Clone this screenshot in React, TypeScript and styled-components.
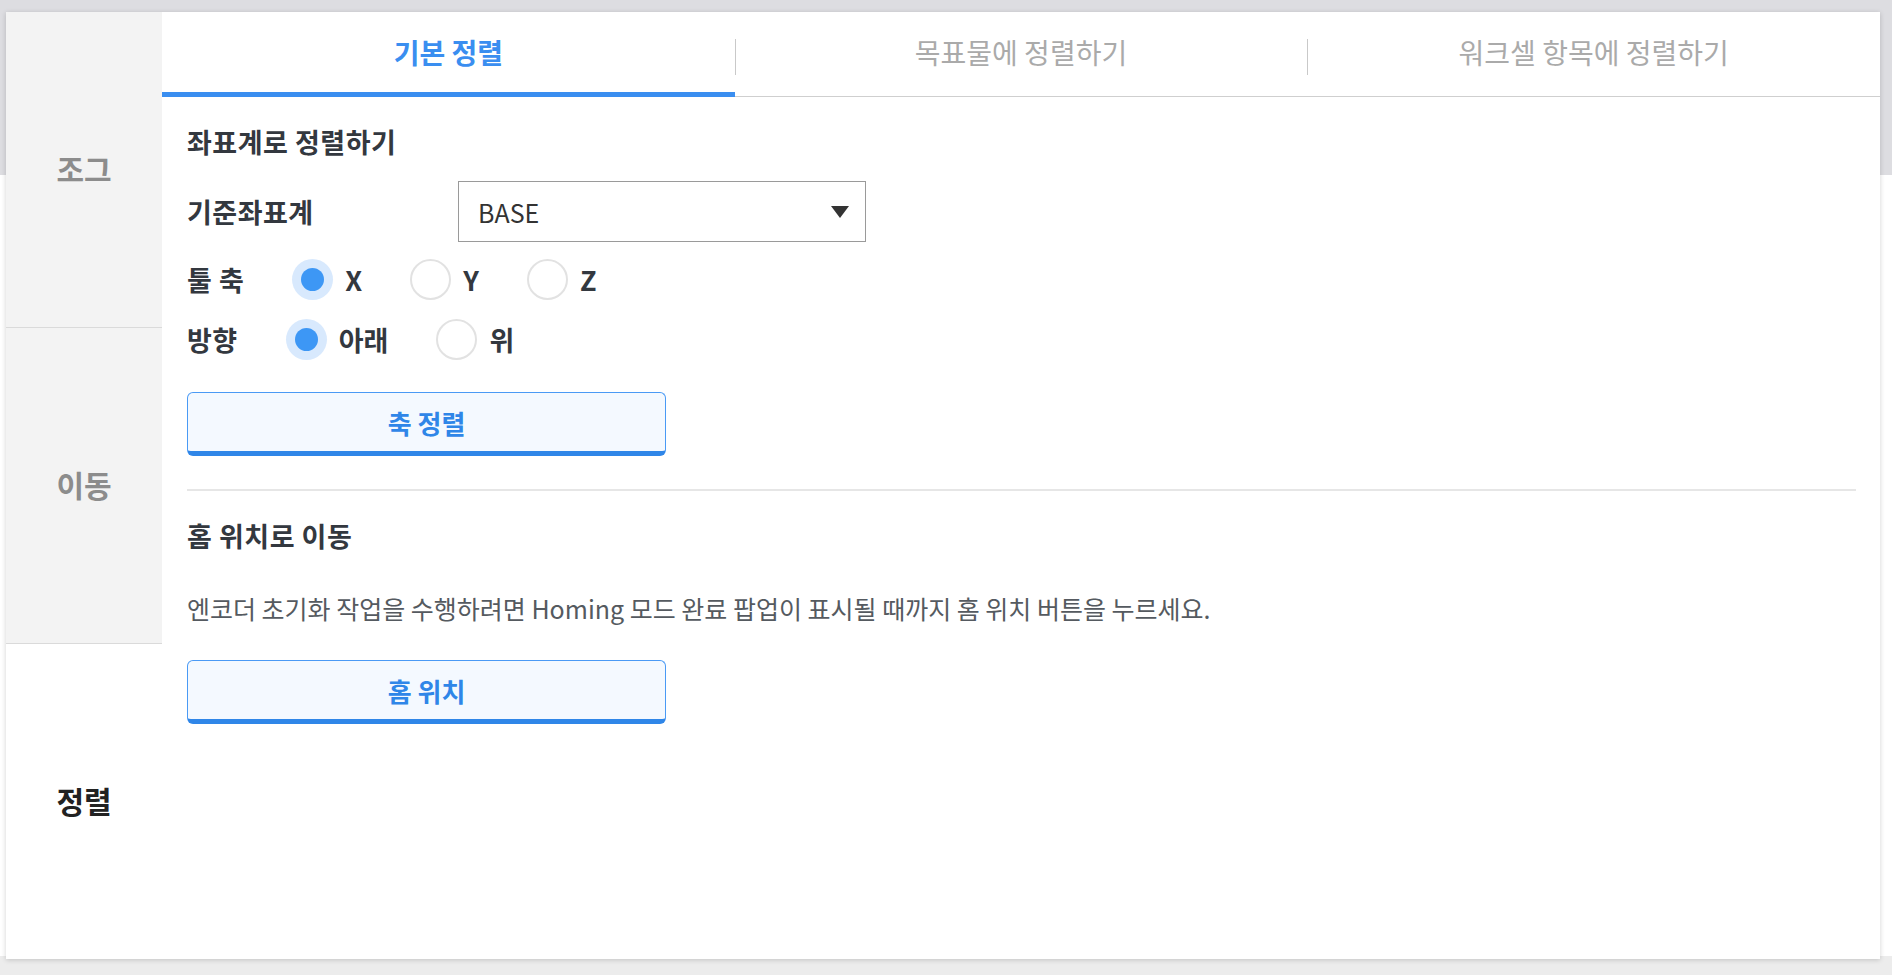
import React, { useState } from "react";
import styled, { createGlobalStyle } from "styled-components";

const GlobalStyle = createGlobalStyle`
  html, body {
    margin: 0;
    padding: 0;
  }
  body {
    font-family: "Noto Sans CJK KR", "Noto Sans", sans-serif;
    background: linear-gradient(
      to bottom,
      #dddde1 0,
      #dddde1 175px,
      #ffffff 175px,
      #ffffff 956px,
      #ececec 956px
    );
    min-height: 975px;
  }
  * { box-sizing: border-box; }
`;

const Page = styled.div`
  padding: 12px 12px 16px 6px;
  height: 975px;
`;

const Card = styled.div`
  display: flex;
  height: 947px;
  background: #ffffff;
  box-shadow: 0 1px 5px rgba(0, 0, 0, 0.18);
`;

const Sidebar = styled.nav`
  width: 156px;
  display: flex;
  flex-direction: column;
`;

const SideItem = styled.div<{ $active?: boolean }>`
  flex: 1;
  display: flex;
  align-items: center;
  justify-content: center;
  padding-bottom: 4px;
  font-size: 30px;
  font-weight: 700;
  color: ${(p) => (p.$active ? "#222222" : "#8c8c8c")};
  background: ${(p) => (p.$active ? "#ffffff" : "#f3f3f3")};
  &:not(:first-child) {
    border-top: 1px solid #dadada;
  }
`;

const Main = styled.div`
  flex: 1;
  display: flex;
  flex-direction: column;
`;

const TabBar = styled.div`
  display: grid;
  grid-template-columns: repeat(3, 1fr);
  border-bottom: 1px solid #cfcfcf;
`;

const Tab = styled.div<{ $active?: boolean }>`
  position: relative;
  height: 85px;
  margin-bottom: -1px;
  padding-bottom: 6px;
  display: flex;
  align-items: center;
  justify-content: center;
  font-size: 28px;
  font-weight: ${(p) => (p.$active ? 700 : 400)};
  color: ${(p) => (p.$active ? "#3a8ef0" : "#aaaaaa")};
  box-shadow: ${(p) => (p.$active ? "inset 0 -5px 0 #3a8ef0" : "none")};
  &:not(:first-child)::before {
    content: "";
    position: absolute;
    left: 0;
    top: 27px;
    height: 36px;
    width: 1px;
    background: #c9c9c9;
  }
`;

const Content = styled.div`
  padding: 28px 24px 0 25px;
  display: flex;
  flex-direction: column;
`;

const Heading = styled.h2`
  margin: 0;
  font-size: 27px;
  letter-spacing: 0.5px;
  line-height: 34px;
  font-weight: 700;
  color: #33383f;
`;

const FieldRow = styled.div`
  display: grid;
  grid-template-columns: 271px 408px;
  align-items: center;
  margin-top: 22px;
`;

const Label = styled.span`
  font-size: 27px;
  letter-spacing: 0.5px;
  font-weight: 700;
  color: #33383f;
  white-space: pre;
`;

const Select = styled.div`
  height: 61px;
  border: 1px solid #9a9a9a;
  display: flex;
  align-items: center;
  justify-content: space-between;
  padding: 0 16px 0 19px;
  font-size: 25px;
  color: #333333;
`;

const Caret = styled.span`
  width: 0;
  height: 0;
  border-left: 9px solid transparent;
  border-right: 9px solid transparent;
  border-top: 12px solid #333333;
`;

const RadioRow = styled.div<{ $top: number }>`
  display: flex;
  align-items: center;
  gap: 48px;
  margin-top: ${(p) => p.$top}px;
  height: 41px;
`;

const Option = styled.label`
  display: flex;
  align-items: center;
  gap: 12px;
  font-size: 27px;
  font-weight: 700;
  color: #33383f;
  cursor: pointer;
`;

const RadioCircle = styled.span<{ $checked?: boolean }>`
  width: 41px;
  height: 41px;
  border-radius: 50%;
  display: flex;
  align-items: center;
  justify-content: center;
  background: ${(p) => (p.$checked ? "#d8e9fd" : "#ffffff")};
  border: ${(p) => (p.$checked ? "none" : "2px solid #e2e2e2")};
  &::after {
    content: "";
    display: ${(p) => (p.$checked ? "block" : "none")};
    width: 23px;
    height: 23px;
    border-radius: 50%;
    background: #3d97f5;
  }
`;

const ButtonWrap = styled.div<{ $top: number }>`
  margin-top: ${(p) => p.$top}px;
`;

const ActionButton = styled.button`
  width: 479px;
  height: 64px;
  border: 1.5px solid #4a9af5;
  border-bottom: 5px solid #2f86e8;
  border-radius: 6px;
  background: #f4f9ff;
  color: #2f86e8;
  font-family: inherit;
  font-size: 26px;
  font-weight: 700;
  padding: 0;
  cursor: pointer;
`;

const Divider = styled.hr`
  margin: 33px 0 0;
  border: 0;
  border-top: 2px solid #e6e6e6;
`;

const SectionTitle = styled(Heading)`
  margin-top: 28px;
`;

const Description = styled.p`
  margin: 38px 0 0;
  font-size: 25px;
  line-height: 34px;
  color: #555a60;
`;

type RadioGroupProps = {
  label: string;
  options: string[];
  value: string;
  onChange: (v: string) => void;
  top: number;
};

const RadioGroup = ({ label, options, value, onChange, top }: RadioGroupProps) => (
  <RadioRow $top={top}>
    <Label>{label}</Label>
    {options.map((o) => (
      <Option key={o} onClick={() => onChange(o)}>
        <RadioCircle $checked={o === value} />
        {o}
      </Option>
    ))}
  </RadioRow>
);

export default function App() {
  const [axis, setAxis] = useState("X");
  const [dir, setDir] = useState("아래");
  return (
    <>
      <GlobalStyle />
      <Page>
        <Card>
          <Sidebar>
            <SideItem>조그</SideItem>
            <SideItem>이동</SideItem>
            <SideItem $active>정렬</SideItem>
          </Sidebar>
          <Main>
            <TabBar>
              <Tab $active>기본 정렬</Tab>
              <Tab>목표물에 정렬하기</Tab>
              <Tab>워크셀 항목에 정렬하기</Tab>
            </TabBar>
            <Content>
              <Heading>좌표계로 정렬하기</Heading>
              <FieldRow>
                <Label>기준좌표계</Label>
                <Select>
                  BASE
                  <Caret />
                </Select>
              </FieldRow>
              <RadioGroup
                label="툴 축"
                options={["X", "Y", "Z"]}
                value={axis}
                onChange={setAxis}
                top={17}
              />
              <RadioGroup
                label="방향"
                options={["아래", "위"]}
                value={dir}
                onChange={setDir}
                top={19}
              />
              <ButtonWrap $top={32}>
                <ActionButton>축 정렬</ActionButton>
              </ButtonWrap>
              <Divider />
              <SectionTitle>홈 위치로 이동</SectionTitle>
              <Description>
                엔코더 초기화 작업을 수행하려면 Homing 모드 완료 팝업이 표시될 때까지 홈 위치 버튼을 누르세요.
              </Description>
              <ButtonWrap $top={35}>
                <ActionButton>홈 위치</ActionButton>
              </ButtonWrap>
            </Content>
          </Main>
        </Card>
      </Page>
    </>
  );
}
